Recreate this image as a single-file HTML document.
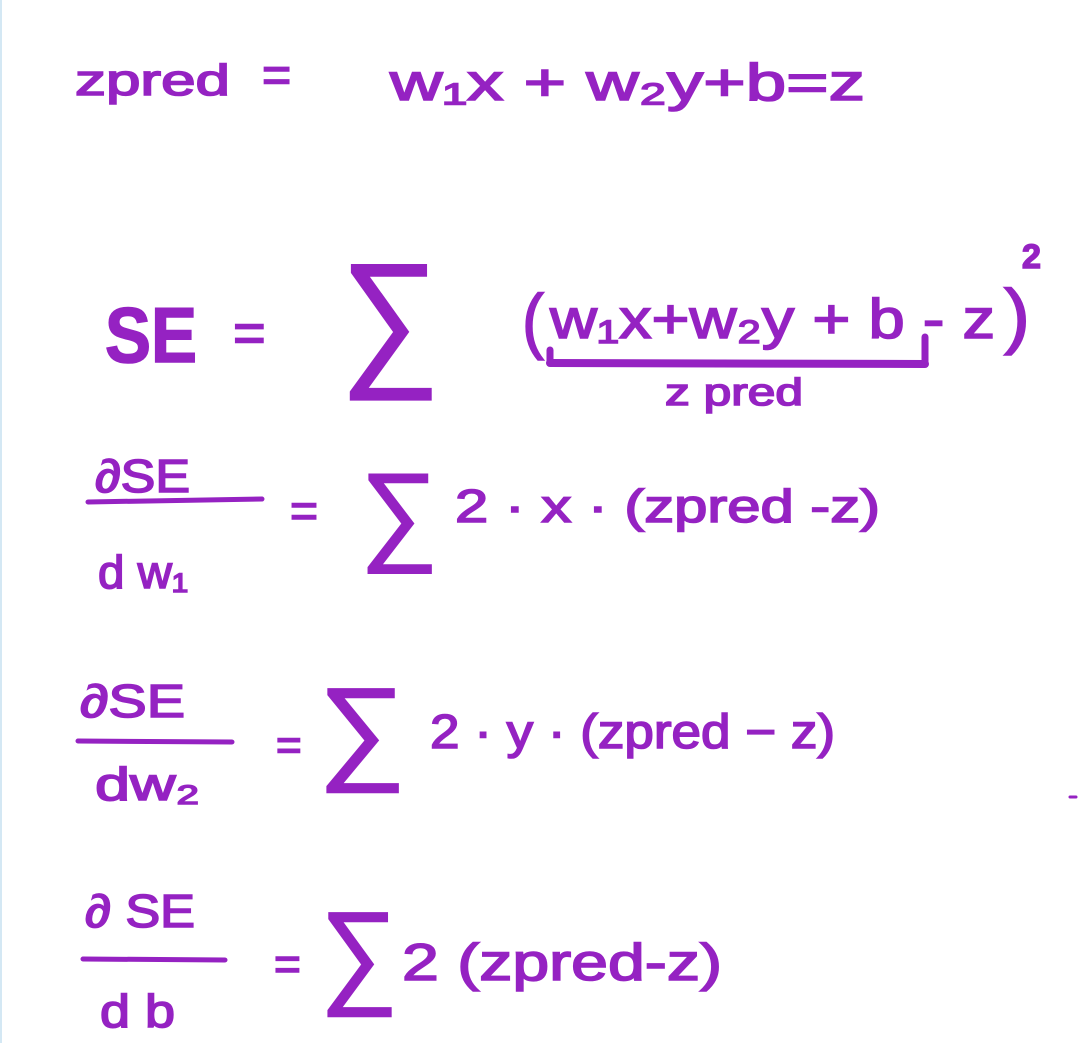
<!DOCTYPE html>
<html><head><meta charset="utf-8"><style>
html,body{margin:0;padding:0;background:#fff;}
svg{display:block}
text{font-family:"Liberation Sans","DejaVu Sans",sans-serif;fill:#9522c2;stroke:#9522c2;stroke-width:1.6;}
</style></head><body>
<svg width="1078" height="1043" viewBox="0 0 1078 1043" xmlns="http://www.w3.org/2000/svg">
<rect x="0" y="0" width="2" height="1043" fill="#d4e8f4"/>
<g stroke="#9522c2" stroke-linecap="round" fill="none">
<line x1="550" y1="363" x2="925" y2="364" stroke-width="8"/>
<line x1="550" y1="350" x2="550" y2="363" stroke-width="7"/>
<line x1="925" y1="337" x2="925" y2="364" stroke-width="7"/>
<line x1="88" y1="502" x2="262" y2="499" stroke-width="5"/>
<line x1="78" y1="741" x2="232" y2="742" stroke-width="5"/>
<line x1="83" y1="959" x2="225" y2="960" stroke-width="5"/>
<line x1="1070" y1="797" x2="1076" y2="797" stroke-width="3"/>
</g>
<text x="75" y="95" font-size="44" textLength="155" lengthAdjust="spacingAndGlyphs">zpred</text>
<text x="262" y="92" font-size="50">=</text>
<text x="390" y="100" font-size="52" textLength="475" lengthAdjust="spacingAndGlyphs">w₁x + w₂y+b=z</text>

<text x="105" y="362" font-size="78" font-weight="bold" textLength="92" lengthAdjust="spacingAndGlyphs">SE</text>
<text x="233" y="352" font-size="56">=</text>
<text x="340" y="368" font-size="150" textLength="100" lengthAdjust="spacingAndGlyphs">∑</text>
<text x="522" y="345" font-size="72" textLength="22" lengthAdjust="spacingAndGlyphs">(</text>
<text x="550" y="338" font-size="56" textLength="445" lengthAdjust="spacingAndGlyphs">w₁x+w₂y + b - z</text>
<text x="1004" y="340" font-size="72" textLength="26" lengthAdjust="spacingAndGlyphs">)</text>
<text x="1022" y="268" font-size="34" font-weight="bold">2</text>
<text x="665" y="405" font-size="38" textLength="138" lengthAdjust="spacingAndGlyphs">z pred</text>

<text x="95" y="492" font-size="46" textLength="95" lengthAdjust="spacingAndGlyphs">∂SE</text>
<text x="98" y="588" font-size="46" textLength="90" lengthAdjust="spacingAndGlyphs">d w₁</text>
<text x="290" y="527" font-size="48">=</text>
<text x="360" y="550" font-size="110" textLength="78" lengthAdjust="spacingAndGlyphs">∑</text>
<text x="455" y="522" font-size="46" textLength="425" lengthAdjust="spacingAndGlyphs">2 · x · (zpred -z)</text>

<text x="80" y="717" font-size="46" textLength="105" lengthAdjust="spacingAndGlyphs">∂SE</text>
<text x="95" y="800" font-size="46" textLength="105" lengthAdjust="spacingAndGlyphs">dw₂</text>
<text x="276" y="760" font-size="44">=</text>
<text x="318" y="768" font-size="115" textLength="88" lengthAdjust="spacingAndGlyphs">∑</text>
<text x="430" y="748" font-size="48" textLength="405" lengthAdjust="spacingAndGlyphs">2 · y · (zpred − z)</text>

<text x="85" y="927" font-size="46" textLength="110" lengthAdjust="spacingAndGlyphs">∂ SE</text>
<text x="100" y="1027" font-size="46" textLength="75" lengthAdjust="spacingAndGlyphs">d b</text>
<text x="274" y="980" font-size="46">=</text>
<text x="320" y="992" font-size="115" textLength="78" lengthAdjust="spacingAndGlyphs">∑</text>
<text x="402" y="980" font-size="52" textLength="320" lengthAdjust="spacingAndGlyphs">2 (zpred-z)</text>
</svg>
</body></html>
